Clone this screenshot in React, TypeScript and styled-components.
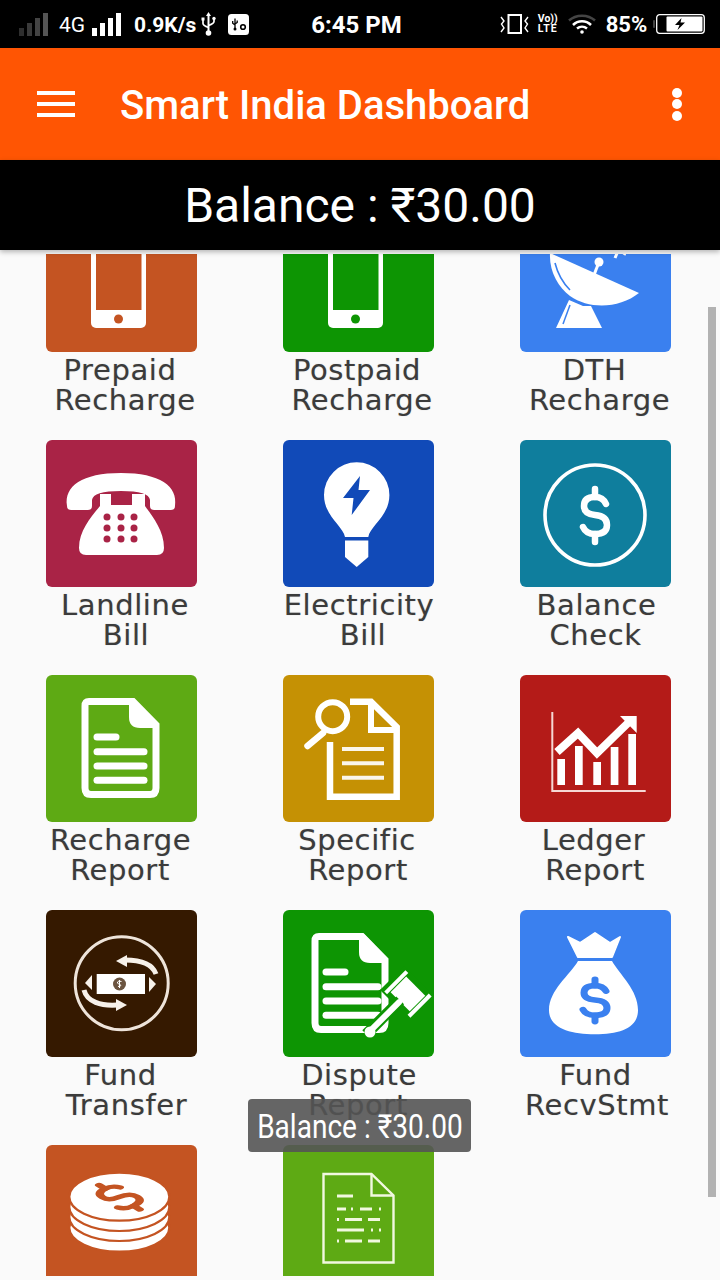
import React from "react";
import styled, { createGlobalStyle } from "styled-components";

const Global = createGlobalStyle`
  html, body { margin: 0; padding: 0; background: #fafafa; }
  * { box-sizing: border-box; }
`;

const Page = styled.div`
  position: relative;
  width: 720px;
  height: 1280px;
  overflow: hidden;
  background: #fafafa;
  display: flex;
  flex-direction: column;
  font-family: Roboto, "Noto Sans", sans-serif;
`;

const StatusBar = styled.div`
  height: 48px;
  background: #000;
  color: #fff;
  display: flex;
  align-items: center;
  padding: 0 12px 0 19px;
  flex: none;
`;

const StatusText = styled.span<{ $size: number; $weight?: number; $left: number }>`
  font-size: ${(p) => p.$size}px;
  font-weight: ${(p) => p.$weight ?? 700};
  margin-left: ${(p) => p.$left}px;
  line-height: 1;
  white-space: nowrap;
  position: relative;
  top: 1px;
`;

const StatusIcon = styled.svg<{ $left: number }>`
  display: block;
  flex: none;
  margin-left: ${(p) => p.$left}px;
`;

const VolteStack = styled.div`
  margin-left: 8px;
  width: 22px;
  display: flex;
  flex-direction: column;
  align-items: center;
  font-weight: 700;
  line-height: 10px;
  font-size: 10.5px;
`;

const VolteLine = styled.span<{ $spacing: number }>`
  letter-spacing: ${(p) => p.$spacing}px;
  white-space: nowrap;
`;

const Toolbar = styled.div`
  height: 112px;
  background: #ff5503;
  color: #fff;
  display: flex;
  align-items: center;
  padding: 0 38px 0 37px;
  flex: none;
`;

const MenuBars = styled.div`
  width: 38px;
  display: flex;
  flex-direction: column;
  gap: 6.5px;
`;

const MenuBar = styled.span`
  display: block;
  height: 4.5px;
  background: #fff;
`;

const Title = styled.div`
  margin-left: 45px;
  flex: 1;
  font-size: 40px;
  font-weight: 500;
  white-space: nowrap;
  position: relative;
  top: 1px;
`;

const MoreDots = styled.div`
  display: flex;
  flex-direction: column;
  gap: 1.5px;
`;

const MoreDot = styled.span`
  display: block;
  width: 10px;
  height: 10px;
  border-radius: 50%;
  background: #fff;
`;

const BalanceBar = styled.div`
  height: 90px;
  background: #000;
  color: #fff;
  display: flex;
  align-items: center;
  justify-content: center;
  font-size: 48px;
  flex: none;
  position: relative;
  z-index: 2;
  box-shadow: 0 2px 5px rgba(0, 0, 0, 0.28);
`;

const Scroller = styled.div`
  margin-top: 4px;
  height: 1022px;
  overflow: hidden;
  flex: none;
`;

const Grid = styled.div`
  margin-top: -49px;
  padding-left: 46px;
  display: grid;
  grid-template-columns: repeat(3, 151px);
  column-gap: 86px;
  grid-auto-rows: 235px;
`;

const Cell = styled.div`
  display: flex;
  flex-direction: column;
  align-items: center;
`;

const Tile = styled.div<{ $bg: string }>`
  width: 151px;
  height: 147px;
  flex: none;
  border-radius: 6px;
  background: ${(p) => p.$bg};
  overflow: hidden;
`;

const TileArt = styled.svg`
  display: block;
  width: 151px;
  height: 147px;
`;

const Label = styled.div`
  margin-top: 4px;
  font-family: "DejaVu Sans", sans-serif;
  font-size: 29px;
  letter-spacing: 0.6px;
  line-height: 29.5px;
  color: #3b3b3b;
  text-shadow: 0 0 1px rgba(60, 60, 60, 0.35);
  display: flex;
  flex-direction: column;
  align-items: center;
`;

const LabelLine = styled.span<{ $shift: number }>`
  white-space: nowrap;
  transform: translateX(${(p) => p.$shift}px);
`;

const ScrollThumb = styled.div`
  position: absolute;
  left: 708px;
  top: 307px;
  width: 8px;
  height: 890px;
  background: #b2b2b2;
`;

const Toast = styled.div`
  position: absolute;
  left: 248px;
  top: 1099px;
  width: 223px;
  height: 53px;
  border-radius: 4px;
  background: rgba(84, 84, 84, 0.9);
  color: #fff;
  display: flex;
  align-items: center;
  justify-content: center;
  overflow: hidden;
`;

const ToastText = styled.span`
  font-size: 33px;
  white-space: nowrap;
  transform: scaleX(0.85);
  position: relative;
  top: 1px;
`;

const W = "#fff";

const Phone = ({ bg }: { bg: string }) => (
  <TileArt viewBox="0 0 151 147">
    <rect x="45" y="25" width="55" height="98" rx="5" fill={W} />
    <rect x="50" y="25" width="45.5" height="80" fill={bg} />
    <circle cx="72.5" cy="114" r="4.5" fill={bg} />
  </TileArt>
);

const Dish = ({ bg }: { bg: string }) => (
  <TileArt viewBox="0 0 151 147">
    <path d="M30 48L119 88C100 103 70 105 50 91C38 82 29 66 30 48Z" fill={W} />
    <path d="M35 58C38 70 43 78 50 85" stroke={bg} strokeWidth="1.6" fill="none" />
    <path d="M79 57L74 70" stroke={W} strokeWidth="3" />
    <circle cx="79" cy="57" r="4.5" fill={W} />
    <path d="M95 53L98 46M104 50L107 44M113 48L115 43" stroke={W} strokeWidth="3" fill="none" />
    <path d="M49 95L63 101L71 101L82 123H36Z" fill={W} />
    <path d="M50 100L43 119" stroke={bg} strokeWidth="1.5" />
  </TileArt>
);

const Telephone = ({ bg }: { bg: string }) => (
  <TileArt viewBox="0 0 151 147">
    <path d="M21 66C18 46 36 33 75 33C114 33 132 46 129 66Q129 70 125 70H108Q104 70 104 66V60Q103 51 75 51Q47 51 46 60V66Q46 70 42 70H25Q21 70 21 66Z" fill={W} />
    <path d="M54 54H65V65H86V54H99V66C106 76 118 90 118 108Q118 115 111 115H40Q33 115 33 108C33 90 46 76 54 66Z" fill={W} />
    {[61, 75, 88].map((x) =>
      [77, 88, 99].map((y) => <circle key={`${x}-${y}`} cx={x} cy={y} r="3.5" fill={bg} />)
    )}
  </TileArt>
);

const Bulb = ({ bg }: { bg: string }) => (
  <TileArt viewBox="0 0 151 147">
    <path d="M62 97C60 86 41 76 41 55A32.7 32.7 0 0 1 106.4 55C106.4 76 87 86 85.3 97Z" fill={W} />
    <path d="M62 100.5H85.3V117L73.7 127L62 117Z" fill={W} />
    <path d="M77 36L60 58H70.5L68.7 75L87 50H75.5Z" fill={bg} />
  </TileArt>
);

const DollarStroke = ({ color, width }: { color: string; width: number }) => (
  <g fill="none" stroke={color} strokeWidth={width} strokeLinecap="round">
    <path d="M86 64Q83 57 75 57Q64 57 64 66Q64 74 75 75Q87 76 87 85Q87 94 75 94Q66 94 63 87" />
    <path d="M75 49V57M75 94V102" />
  </g>
);

const BalanceIcon = () => (
  <TileArt viewBox="0 0 151 147">
    <circle cx="75" cy="75" r="50" fill="none" stroke={W} strokeWidth="3.6" />
    <DollarStroke color={W} width={6.5} />
  </TileArt>
);

const DocLines = ({ color, x, w }: { color: string; x: number; w: number }) => (
  <g stroke={color} strokeWidth="7" strokeLinecap="round" fill="none">
    <path d={`M${x + 3} 62H${x + 22}`} />
    <path d={`M${x + 3} 76.7H${x + w}`} />
    <path d={`M${x + 3} 91H${x + w}`} />
    <path d={`M${x + 3} 105.3H${x + w}`} />
  </g>
);

const RechargeReport = () => (
  <TileArt viewBox="0 0 151 147">
    <path d="M43 26.5H87L110 50V113Q110 119.5 104 119.5H45Q39 119.5 39 113V31Q39 26.5 43 26.5Z" fill="none" stroke={W} strokeWidth="7" />
    <path d="M83 24H88L113 49V53H94Q83 53 83 42Z" fill={W} />
    <DocLines color={W} x={48} w={50} />
  </TileArt>
);

const SpecificReport = () => (
  <TileArt viewBox="0 0 151 147">
    <circle cx="49.7" cy="41.7" r="14.5" fill="none" stroke={W} strokeWidth="6" />
    <path d="M40 58L24.5 71" stroke={W} strokeWidth="6.5" strokeLinecap="round" />
    <path d="M67 26.7H88L113.7 52V121.7H47V67" fill="none" stroke={W} strokeWidth="6.5" />
    <path d="M88 27V55H113" fill="none" stroke={W} strokeWidth="6" />
    <g stroke="#fff" strokeWidth="4" opacity="0.92">
      <path d="M59 74H101M59 88.3H101M59 102.7H101" />
    </g>
  </TileArt>
);

const LedgerChart = () => (
  <TileArt viewBox="0 0 151 147">
    <path d="M32.3 37V116H125.7" fill="none" stroke="#f6d8d4" strokeWidth="2" />
    <g fill={W}>
      <rect x="37.3" y="84" width="7.7" height="26" />
      <rect x="55" y="71" width="7.7" height="39" />
      <rect x="73.3" y="87" width="7.7" height="23" />
      <rect x="90.7" y="72" width="7.7" height="38" />
      <rect x="108.3" y="59" width="7.7" height="51" />
    </g>
    <path d="M37 77L58 58L77 78L109 47" fill="none" stroke={W} strokeWidth="8" />
    <path d="M100 41H116.7V58Z" fill={W} />
  </TileArt>
);

const FundTransfer = ({ bg }: { bg: string }) => (
  <TileArt viewBox="0 0 151 147">
    <circle cx="75.7" cy="73.3" r="46.5" fill="none" stroke="#eee4da" strokeWidth="3" />
    <rect x="50.7" y="64" width="48.3" height="20" fill={W} />
    <circle cx="73.5" cy="74" r="6.5" fill="#6b5440" />
    <path d="M73.5 70V78M75.5 71.5Q71 70.5 71.5 73Q72 74 74 74.5Q76.5 76 72 76.5" stroke="#fff" strokeWidth="1" fill="none" />
    <g fill="none" stroke="#f7f1ea" strokeWidth="5">
      <path d="M110 64C106 53 94 50 79 50" />
      <path d="M38 80C41 92 55 96 71 95" />
    </g>
    <path d="M70 51L81 45V57Z" fill="#f7f1ea" />
    <path d="M81 95L70 89V101Z" fill="#f7f1ea" />
    <path d="M46 65L39 73L46 80Z" fill="#f7f1ea" />
    <path d="M103 67L110 74L103 82Z" fill="#f7f1ea" />
    <rect width="0" height="0" fill={bg} />
  </TileArt>
);

const DisputeReport = ({ bg }: { bg: string }) => (
  <TileArt viewBox="0 0 151 147">
    <path d="M36 26.5H79L102 50V113Q102 119.5 96 119.5H38Q32 119.5 32 113V31Q32 26.5 36 26.5Z" fill="none" stroke={W} strokeWidth="7" />
    <path d="M76 24H81L105 49V53H87Q76 53 76 42Z" fill={W} />
    <DocLines color={W} x={40} w={55} />
    <g transform="translate(126 85) rotate(45)">
      <rect x="-24" y="-17" width="34" height="34" fill={bg} />
      <rect x="-15" y="-11" width="27" height="22" fill={W} />
      <rect x="-20" y="-15" width="4" height="30" fill={W} />
      <rect x="13" y="-15" width="4" height="30" fill={W} />
      <rect x="-8" y="10" width="11" height="48" fill={bg} />
      <rect x="-5" y="9" width="6" height="44" rx="3" fill={W} />
    </g>
    <circle cx="87" cy="122" r="5.5" fill={W} />
  </TileArt>
);

const MoneyBag = ({ bg }: { bg: string }) => (
  <TileArt viewBox="0 0 151 147">
    <path d="M48 27L60 33L75 23L90 33L100 27L92 47H58Z" fill={W} stroke={W} strokeWidth="2" strokeLinejoin="round" />
    <path d="M58 51H92C100 65 118 80 118 100C118 118 100 124.3 75 124.3C50 124.3 29 118 29 100C29 80 50 65 58 51Z" fill={W} />
    <g transform="translate(0 30) scale(1 .8)">
      <DollarStroke color={bg} width={7} />
    </g>
  </TileArt>
);

const Coins = ({ bg }: { bg: string }) => (
  <TileArt viewBox="0 0 151 147">
    {[82.7, 72, 62, 51.7].map((cy) => (
      <ellipse key={cy} cx="73.3" cy={cy} rx="50" ry="24" fill={W} stroke={bg} strokeWidth="2.2" />
    ))}
    <g transform="translate(73 52) scale(1.15 .62) rotate(-42) translate(-75 -75)">
      <DollarStroke color={bg} width={7} />
    </g>
  </TileArt>
);

const PlainDoc = () => (
  <TileArt viewBox="0 0 151 147">
    <path d="M40.5 29H88.5L110.5 50.5V117.5H40.5Z" fill="none" stroke="#f1f8df" strokeWidth="2.4" />
    <path d="M88.5 29V50.5H110.5" fill="none" stroke="#f1f8df" strokeWidth="2.4" />
    <g stroke="#f1f8df" strokeWidth="3" fill="none">
      <path d="M54 51H70" />
      <path d="M54 64H63M68 64H70M77 64H89M96 64H98" />
      <path d="M54 74.5H56M62 74.5H79M85 74.5H97" />
      <path d="M54 85H81M88 85H90M96 85H98" />
      <path d="M54 96H56M62 96H79M85 96H97" />
    </g>
  </TileArt>
);

type Line = [string, number];
type Item = { bg: string; lines: Line[]; art: (bg: string) => React.ReactNode };

const items: Item[] = [
  { bg: "#c45422", lines: [["Prepaid", -1.5], ["Recharge", 3.5]], art: (b) => <Phone bg={b} /> },
  { bg: "#0d9503", lines: [["Postpaid", -1.5], ["Recharge", 3.5]], art: (b) => <Phone bg={b} /> },
  { bg: "#3a80ef", lines: [["DTH", -1], ["Recharge", 4]], art: (b) => <Dish bg={b} /> },
  { bg: "#a92346", lines: [["Landline", 3.5], ["Bill", 4.5]], art: (b) => <Telephone bg={b} /> },
  { bg: "#114ab8", lines: [["Electricity", 0.5], ["Bill", 4.5]], art: (b) => <Bulb bg={b} /> },
  { bg: "#0f7e9d", lines: [["Balance", 1], ["Check", 0]], art: () => <BalanceIcon /> },
  { bg: "#5eaa14", lines: [["Recharge", -1], ["Report", -1.5]], art: () => <RechargeReport /> },
  { bg: "#c59104", lines: [["Specific", -1.5], ["Report", -0.5]], art: () => <SpecificReport /> },
  { bg: "#b41b18", lines: [["Ledger", -2], ["Report", -0.5]], art: () => <LedgerChart /> },
  { bg: "#351900", lines: [["Fund", -1], ["Transfer", 5]], art: (b) => <FundTransfer bg={b} /> },
  { bg: "#0d9503", lines: [["Dispute", 0.5], ["Report", -0.5]], art: (b) => <DisputeReport bg={b} /> },
  { bg: "#3a80ef", lines: [["Fund", 0], ["RecvStmt", 1.5]], art: (b) => <MoneyBag bg={b} /> },
  { bg: "#c45422", lines: [], art: (b) => <Coins bg={b} /> },
  { bg: "#5eaa14", lines: [], art: () => <PlainDoc /> },
];

const Bars = ({ color, left }: { color: string; left: number }) => (
  <StatusIcon $left={left} width="29" height="23" viewBox="0 0 29 23">
    <rect x="0" y="15" width="5" height="8" fill={color} />
    <rect x="8" y="10" width="5" height="13" fill={color} />
    <rect x="16" y="5" width="5" height="18" fill={color} />
    <rect x="24" y="0" width="5" height="23" fill={color} />
  </StatusIcon>
);

const DimBars = ({ left }: { left: number }) => (
  <StatusIcon $left={left} width="29" height="23" viewBox="0 0 29 23">
    <rect x="0" y="15" width="5" height="8" fill="#2e2e2e" />
    <rect x="8" y="10" width="5" height="13" fill="#3a3a3a" />
    <rect x="16" y="5" width="5" height="18" fill="#444" />
    <rect x="24" y="0" width="5" height="23" fill="#555" />
  </StatusIcon>
);

const UsbIcon = ({ left }: { left: number }) => (
  <StatusIcon $left={left} width="15" height="24" viewBox="0 0 15 24">
    <path d="M7.5 3V20" stroke="#fff" strokeWidth="2" />
    <path d="M7.5 0L10 4H5Z" fill="#fff" />
    <circle cx="7.5" cy="21" r="2.8" fill="#fff" />
    <path d="M2 8V11.5Q2 13.5 7.5 15.5M13 7V9.5Q13 11.5 7.5 13.5" stroke="#fff" strokeWidth="1.7" fill="none" />
    <rect x="0.5" y="5.5" width="3" height="3" fill="#fff" />
    <circle cx="13" cy="6.5" r="1.7" fill="#fff" />
  </StatusIcon>
);

const UsbBadge = ({ left }: { left: number }) => (
  <StatusIcon $left={left} width="21" height="21" viewBox="0 0 21 21">
    <rect width="21" height="21" rx="3.5" fill="#fff" />
    <path d="M7 4.5V15M4.7 7V9.2L7 11M9.2 6.5V8.5L7 10" stroke="#000" strokeWidth="1.3" fill="none" />
    <circle cx="7" cy="15" r="1.5" fill="#000" />
    <circle cx="15" cy="13" r="2.3" fill="none" stroke="#000" strokeWidth="1.6" />
  </StatusIcon>
);

const Vibrate = ({ left }: { left: number }) => (
  <StatusIcon $left={left} width="29" height="20" viewBox="0 0 29 20">
    <rect x="8.5" y="1" width="12.5" height="18" fill="none" stroke="#fff" strokeWidth="2" />
    <path d="M1 3L4 7L1.5 10L4 14L1 18M28 3L25 7L27.5 10L25 14L28 18" stroke="#fff" strokeWidth="1.4" fill="none" />
  </StatusIcon>
);

const Wifi = ({ left }: { left: number }) => (
  <StatusIcon $left={left} width="28" height="20" viewBox="0 0 28 20">
    <path d="M1 6.5C8 0 20 0 27 6.5" stroke="#444" strokeWidth="2.5" fill="none" />
    <path d="M5 11C10 6 18 6 23 11" stroke="#fff" strokeWidth="2.5" fill="none" />
    <path d="M9 14.5C12 12 16 12 19 14.5" stroke="#fff" strokeWidth="2.5" fill="none" />
    <circle cx="14" cy="18" r="1.8" fill="#fff" />
  </StatusIcon>
);

const Battery = ({ left }: { left: number }) => (
  <StatusIcon $left={left} width="52" height="20" viewBox="0 0 52 20">
    <rect x="0" y="6" width="2" height="8" rx="1" fill="#444" />
    <rect x="3.7" y="0.7" width="47.6" height="18.6" rx="3" fill="none" stroke="#fff" strokeWidth="1.3" />
    <rect x="13.5" y="2.5" width="36" height="15" rx="1" fill="#fff" />
    <path d="M28.5 4L22 11H26.5L24.5 16L32 8.5H27.5Z" fill="#000" />
  </StatusIcon>
);

export default function App() {
  return (
    <Page>
      <Global />
      <StatusBar>
        <DimBars left={0} />
        <StatusText $size={21} $weight={400} $left={11}>4G</StatusText>
        <Bars color="#fff" left={7} />
        <StatusText $size={21} $left={13}>0.9K/s</StatusText>
        <UsbIcon left={5} />
        <UsbBadge left={12} />
        <StatusText $size={24} $left={62}>6:45 PM</StatusText>
        <Vibrate left={98} />
        <VolteStack>
          <VolteLine $spacing={0}>Vo))</VolteLine>
          <VolteLine $spacing={1}>LTE</VolteLine>
        </VolteStack>
        <Wifi left={9} />
        <StatusText $size={22} $left={10}>85%</StatusText>
        <Battery left={6} />
      </StatusBar>
      <Toolbar>
        <MenuBars>
          <MenuBar />
          <MenuBar />
          <MenuBar />
        </MenuBars>
        <Title>Smart India Dashboard</Title>
        <MoreDots>
          <MoreDot />
          <MoreDot />
          <MoreDot />
        </MoreDots>
      </Toolbar>
      <BalanceBar>Balance : ₹30.00</BalanceBar>
      <Scroller>
        <Grid>
          {items.map((it, i) => (
            <Cell key={i}>
              <Tile $bg={it.bg}>{it.art(it.bg)}</Tile>
              <Label>
                {it.lines.map(([text, shift]) => (
                  <LabelLine key={text} $shift={shift}>{text}</LabelLine>
                ))}
              </Label>
            </Cell>
          ))}
        </Grid>
      </Scroller>
      <ScrollThumb />
      <Toast>
        <ToastText>Balance : ₹30.00</ToastText>
      </Toast>
    </Page>
  );
}
